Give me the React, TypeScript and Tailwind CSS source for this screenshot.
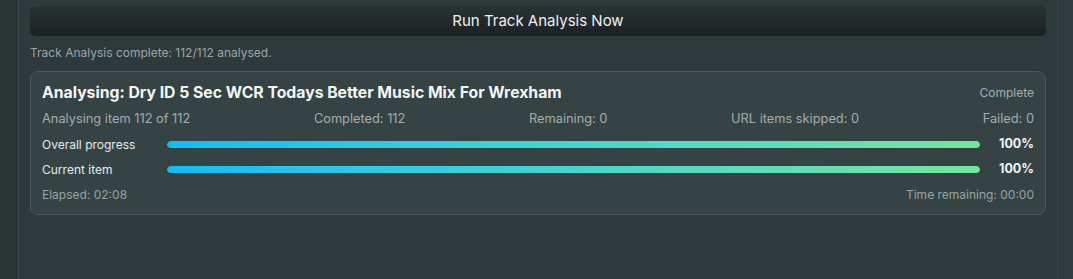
import React from 'react'

const font = { fontFamily: 'Inter, "Noto Sans", "Liberation Sans", sans-serif' }

function Bar({ label, value }: { label: string; value: number }) {
  return (
    <div className="flex items-center h-[25px]">
      <div className="w-[125px] text-[12px] text-[#e6eaea]">{label}</div>
      <div className="flex-1 h-[7px] rounded-full bg-[#2a3334] overflow-hidden">
        <div
          className="h-full rounded-full bg-gradient-to-r from-[#0fbdf6] via-[#45d5cf] to-[#74e69c]"
          style={{ width: `${value}%` }}
        />
      </div>
      <div className="w-[54px] text-right text-[12.5px] font-bold text-[#f2f4f4]">{value}%</div>
    </div>
  )
}

export default function App() {
  return (
    <div className="w-[1073px] h-[279px] flex bg-[#2d393a] overflow-hidden" style={font}>
      {/* left gutter */}
      <div className="w-[19px] h-full bg-[#2a3536] border-r border-[#3a4647]" />

      <div className="flex-1 px-[11px] pt-[6px]">
        <button className="w-full h-[30px] rounded-[5px] bg-gradient-to-b from-[#2b3233] to-[#1b2123] text-[15px] text-[#eef0f0]">
          Run Track Analysis Now
        </button>

        <div className="mt-[9px] h-[16px] leading-[16px] text-[12px] text-[#9aa6a6]">
          Track Analysis complete: 112/112 analysed.
        </div>

        <div className="mt-[10px] rounded-[8px] border border-[#4a5758] bg-[#354344] px-[11px] pt-[11px] pb-[7px]">
          <div className="flex items-center justify-between h-[20px]">
            <div className="text-[15.75px] font-bold text-[#f4f6f6]">
              Analysing: Dry ID 5 Sec WCR Todays Better Music Mix For Wrexham
            </div>
            <div className="text-[12px] text-[#a3adad]">Complete</div>
          </div>

          <div className="mt-[8px] flex items-center justify-between h-[16px] text-[12.8px] text-[#a3adad]">
            <span>Analysing item 112 of 112</span>
            <span>Completed: 112</span>
            <span>Remaining: 0</span>
            <span>URL items skipped: 0</span>
            <span>Failed: 0</span>
          </div>

          <div className="mt-[5px]">
            <Bar label="Overall progress" value={100} />
            <Bar label="Current item" value={100} />
          </div>

          <div className="flex items-center justify-between h-[25px] text-[12px] text-[#97a3a3]">
            <span>Elapsed: 02:08</span>
            <span>Time remaining: 00:00</span>
          </div>
        </div>
      </div>

      {/* right gutter */}
      <div className="w-[16px] h-full bg-[#2f3b3c] border-l border-[#3a4647]" />
    </div>
  )
}
